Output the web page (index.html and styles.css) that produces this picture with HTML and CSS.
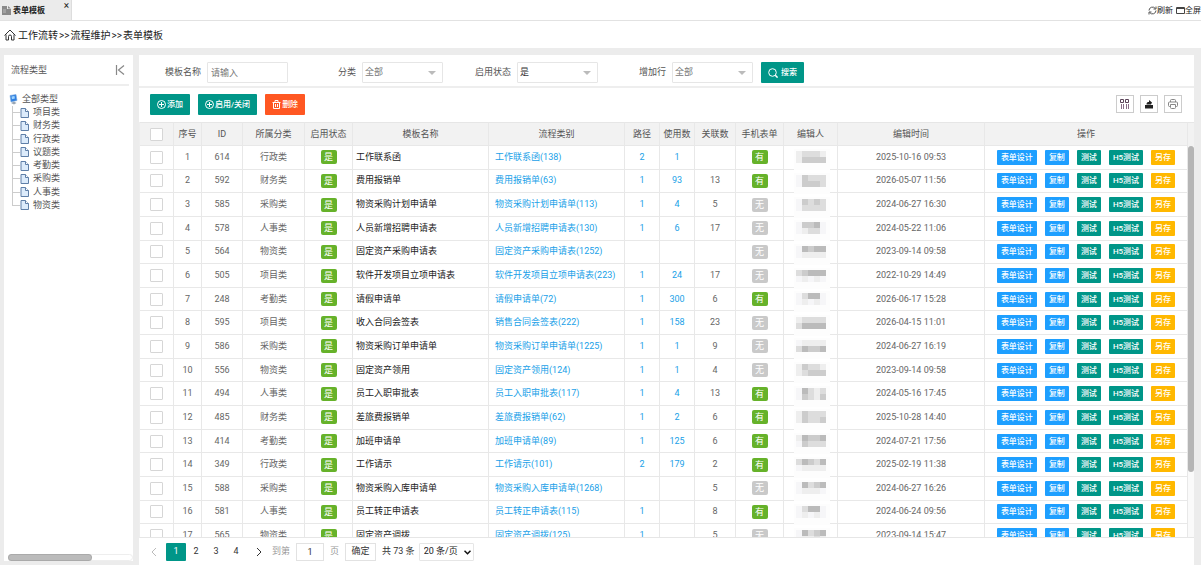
FILE: index.html
```html
<!DOCTYPE html>
<html lang="zh-CN">
<head>
  <meta charset="UTF-8">
  <meta name="viewport" content="width=device-width, initial-scale=1.0">
  <title>表单模板</title>
  <link rel="stylesheet" href="styles.css">
</head>
<body>
  <header class="tab-bar">
    <div class="tab">
      <svg class="tab-icon" width="9" height="10" viewBox="0 0 9 10"><path d="M0 1h5v3h4v6H0z" fill="#8a8a8a"/><path d="M6 1l3 2.500H6z" fill="#8a8a8a"/><path d="M1 5h3M1 7h3" stroke="#bbb"/></svg>
      <span class="tab-title">表单模板</span>
      <button class="tab-close" aria-label="关闭">×</button>
    </div>
    <nav class="tab-tools">
      <a href="#"><svg width="9" height="9" viewBox="0 0 9 9" fill="none" stroke="#555"><path d="M1 4.500a3.500 3.500 0 0 1 6.300-2M8 4.500a3.500 3.500 0 0 1-6.300 2"/><path d="M8 .5v2.500H5.500M1 8.500V6h2.500"/></svg>刷新</a>
      <a href="#"><svg width="9" height="9" viewBox="0 0 9 9" fill="none" stroke="#444"><path d="M.5 1.500h8v6h-8zM.5 2.500h8"/></svg>全屏</a>
    </nav>
  </header>

  <nav class="crumbs">
    <svg width="12" height="12" viewBox="0 0 12 12" fill="none" stroke="#333"><path d="M.5 6.500L6 1l5.500 5.500M2 5.500v5.500h2.500V7.500a1.500 1.500 0 0 1 3 0V11H10V5.500"/></svg>
    <span>工作流转</span><span>&gt;&gt;</span><span>流程维护</span><span>&gt;&gt;</span><span>表单模板</span>
  </nav>

  <div class="layout">
    <aside class="sidebar">
      <div class="sidebar-head">
        <span>流程类型</span>
        <button class="collapse" aria-label="收起"><svg width="10" height="10" viewBox="0 0 10 10" fill="none" stroke="#888" stroke-width="1.200"><path d="M1.500 0v10M9 .5L3.500 5 9 9.500"/></svg></button>
      </div>
      <div class="tree">
        <a href="#" class="tree-root">
          <svg width="9" height="11" viewBox="0 0 9 11"><path d="M1 1.500L7 .5l1 6-6 1.500z" fill="#2f7fe0" stroke="#7aa9dd" stroke-width=".6"/><path d="M2.500 2.500l3-.6.4 2.600-3 .8z" fill="#9fd4ff"/><path d="M2 9l3-1.500L7.500 9 5 10.500z" fill="#9aa7b5"/></svg>
          全部类型
        </a>
        <ul class="tree-list" id="treeList"></ul>
      </div>
      <div class="h-scroll"><div class="h-thumb"></div></div>
    </aside>

    <main class="main">
      <form class="filters">
        <div class="field"><label for="tplName">模板名称</label><input id="tplName" type="text" placeholder="请输入"></div>
        <div class="field"><label for="category">分类</label><div class="select"><select id="category"><option>全部</option></select></div></div>
        <div class="field"><label for="enabled">启用状态</label><div class="select"><select id="enabled" class="chosen"><option>是</option><option>否</option></select></div></div>
        <div class="field"><label for="addRow">增加行</label><div class="select"><select id="addRow"><option>全部</option></select></div></div>
        <button type="button" class="btn btn-search"><svg width="10" height="10" viewBox="0 0 10 10" fill="none" stroke="#fff"><circle cx="4.500" cy="4.500" r="3.800"/><path d="M7.300 7.300L9.600 9.600" stroke-width="1.500"/></svg>搜索</button>
      </form>

      <div class="toolbar">
        <button class="btn"><svg width="9" height="9" viewBox="0 0 9 9" fill="none" stroke="#fff"><circle cx="4.500" cy="4.500" r="4"/><path d="M4.500 2v5M2 4.500h5"/></svg>添加</button>
        <button class="btn"><svg width="9" height="9" viewBox="0 0 9 9" fill="none" stroke="#fff"><circle cx="4.500" cy="4.500" r="4"/><path d="M4.500 2v5M2 4.500h5"/></svg>启用/关闭</button>
        <button class="btn btn-danger"><svg width="9" height="9" viewBox="0 0 9 9" fill="none" stroke="#fff"><path d="M.5 2.500h8M3 2.500v-2h3v2M1.500 2.500v6h6v-6M3.500 4v3M5.500 4v3"/></svg>删除</button>
        <div class="table-tools">
          <button aria-label="筛选列"><svg width="10" height="10" viewBox="0 0 10 10" fill="none" stroke="#5b4358"><path d="M.5 .5h3v3h-3zM5.500 .5h3v3h-3z"/><path d="M1.500 5v5M3.500 5v5M6.500 5v5M8.500 5v5" stroke="#8a6f88"/></svg></button>
          <button aria-label="导出"><svg width="10" height="10" viewBox="0 0 10 10"><path d="M1 6h8v3.500H1z" fill="#222"/><path d="M2.500 5.500c0-2 1-2.500 2.500-2.500V1l3 2.500-1 2z" fill="#222"/></svg></button>
          <button aria-label="打印"><svg width="10" height="10" viewBox="0 0 10 10" fill="none" stroke="#888"><path d="M2.500 3V1.500a1 1 0 0 1 1-1h3a1 1 0 0 1 1 1V3M2.500 7.500h-1a1 1 0 0 1-1-1V4a1 1 0 0 1 1-1h7a1 1 0 0 1 1 1v2.500a1 1 0 0 1-1 1h-1M2.500 5.500h5v3a1 1 0 0 1-1 1h-3a1 1 0 0 1-1-1z"/></svg></button>
        </div>
      </div>

      <div class="table-area">
        <div class="table-scroll">
          <table>
            <colgroup>
              <col class="w-check"><col class="w-no"><col class="w-id"><col class="w-cat"><col class="w-state">
              <col class="w-name"><col class="w-name"><col class="w-num"><col class="w-num"><col class="w-id">
              <col class="w-state"><col class="w-editor"><col class="w-time"><col>
            </colgroup>
            <thead>
              <tr>
                <th><input type="checkbox" aria-label="全选"></th>
                <th>序号</th><th>ID</th><th>所属分类</th><th>启用状态</th><th>模板名称</th><th>流程类别</th>
                <th>路径</th><th>使用数</th><th>关联数</th><th>手机表单</th><th>编辑人</th><th>编辑时间</th><th>操作</th>
              </tr>
            </thead>
            <tbody id="rows"></tbody>
          </table>
        </div>
        <div class="v-scroll"><div class="v-head"></div><div class="v-thumb"></div></div>
      </div>

      <div class="pager">
        <button class="page arrow" disabled aria-label="上一页"><svg width="6" height="10" viewBox="0 0 6 10" fill="none" stroke="#bbb"><path d="M5 1L1 5l4 4"/></svg></button>
        <button class="page current">1</button>
        <button class="page">2</button>
        <button class="page">3</button>
        <button class="page">4</button>
        <button class="page arrow next" aria-label="下一页"><svg width="6" height="10" viewBox="0 0 6 10" fill="none" stroke="#333"><path d="M1 1l4 4-4 4"/></svg></button>
        <label class="muted" for="gotoPage">到第</label>
        <input id="gotoPage" type="text" value="1">
        <span class="muted">页</span>
        <button class="confirm">确定</button>
        <span>共 73 条</span>
        <div class="select page-size"><select aria-label="每页条数"><option>20 条/页</option></select><svg width="7" height="5" viewBox="0 0 7 5" fill="none" stroke="#111" stroke-width="1.500"><path d="M.5 .8l3 3 3-3"/></svg></div>
      </div>
    </main>
  </div>

  <script>
    const types = ['项目类', '财务类', '行政类', '议题类', '考勤类', '采购类', '人事类', '物资类'];

    // id, 分类, 模板名称, 流程类别, 路径, 使用数, 关联数, 手机表单, 编辑时间, 编辑人色块
    const rows = [
      [614, '行政类', '工作联系函', '工作联系函(138)', 2, 1, '', 1, '2025-10-16 09:53', 'edddeecccc'],
      [592, '财务类', '费用报销单', '费用报销单(63)', 1, 93, 13, 1, '2026-05-07 11:56', 'fcdddfcccd'],
      [585, '采购类', '物资采购计划申请单', '物资采购计划申请单(113)', 1, 4, 5, 0, '2024-06-27 16:30', 'fcdcdfdddd'],
      [578, '人事类', '人员新增招聘申请表', '人员新增招聘申请表(130)', 1, 6, 17, 0, '2024-05-22 11:06', 'fccbffeddf'],
      [564, '物资类', '固定资产采购申请表', '固定资产采购申请表(1252)', '', '', '', 0, '2023-09-14 09:58', 'fbcbbfeeee'],
      [505, '项目类', '软件开发项目立项申请表', '软件开发项目立项申请表(223)', 1, 24, 17, 0, '2022-10-29 14:49', 'dcbbbfefef'],
      [248, '考勤类', '请假申请单', '请假申请单(72)', 1, 300, 6, 1, '2026-06-17 15:28', 'fdbbffefef'],
      [595, '项目类', '收入合同会签表', '销售合同会签表(222)', 1, 158, 23, 0, '2026-04-15 11:01', 'edddddbbbb'],
      [586, '采购类', '物资采购订单申请单', '物资采购订单申请单(1225)', 1, 1, 9, 0, '2024-06-27 16:19', 'feeeedbccb'],
      [556, '物资类', '固定资产领用', '固定资产领用(124)', 1, 1, 4, 0, '2023-09-14 09:58', 'ecddeedccc'],
      [494, '人事类', '员工入职审批表', '员工入职审批表(117)', 1, 4, 13, 1, '2024-05-16 17:45', 'fbdedfcdec'],
      [485, '财务类', '差旅费报销单', '差旅费报销单(62)', 1, 2, 6, 1, '2025-10-28 14:40', 'ecdddecddc'],
      [414, '考勤类', '加班申请单', '加班申请单(89)', 1, 125, 6, 1, '2024-07-21 17:56', 'ebccbfcddd'],
      [349, '行政类', '工作请示', '工作请示(101)', 2, 179, 2, 1, '2025-02-19 11:38', 'dbcdbfeeee'],
      [588, '采购类', '物资采购入库申请单', '物资采购入库申请单(1268)', '', '', 5, 0, '2024-06-27 16:26', 'fbdcbfeeef'],
      [581, '人事类', '员工转正申请表', '员工转正申请表(115)', 1, '', 8, 1, '2024-06-24 09:56', 'fdbbffefef'],
      [565, '物资类', '固定资产调拨', '固定资产调拨(125)', 1, '', 5, 0, '2023-09-14 15:47', 'fbdcbfeede']
    ];

    // 编辑人打码: 5 x 2 的灰度方块
    function mosaic(shades) {
      let rects = '<rect x="7" y="-2" width="36" height="21" fill="#fdfdfd"/>';
      [...shades].forEach((c, i) => {
        const x = 9 + (i % 5) * 6;
        const y = Math.floor(i / 5) * 6;
        rects += `<rect x="${x}" y="${y}" width="6" height="6" fill="#${c.repeat(3)}"/>`;
      });
      return rects.replaceAll('#fff', '#f6f6f8');
    }

    document.getElementById('treeList').innerHTML = types.map(name => `
      <li><a href="#">
        <svg width="9" height="10" viewBox="0 0 9 10"><path d="M1 .5h4.500l3 3v6H1z" fill="#dcebfb" stroke="#5f7fa8"/><path d="M5.500 .5v3h3" fill="#fff" stroke="#5f7fa8"/></svg>
        ${name}</a></li>`).join('');

    document.getElementById('rows').innerHTML = rows.map((r, i) => `
      <tr>
        <td><input type="checkbox" aria-label="选择 ${r[0]}"></td>
        <td>${i + 1}</td>
        <td>${r[0]}</td>
        <td>${r[1]}</td>
        <td><span class="tag">是</span></td>
        <td class="name">${r[2]}</td>
        <td class="flow"><a href="#">${r[3]}</a></td>
        <td><a href="#">${r[4]}</a></td>
        <td><a href="#">${r[5]}</a></td>
        <td>${r[6]}</td>
        <td><span class="tag ${r[7] ? '' : 'off'}">${r[7] ? '有' : '无'}</span></td>
        <td><svg class="mosaic" width="48" height="12" viewBox="0 0 48 12">${mosaic(r[9])}</svg></td>
        <td>${r[8]}</td>
        <td><div class="actions">
          <button class="blue">表单设计</button><button class="blue">复制</button><button>测试</button><button>H5测试</button><button class="yellow">另存</button>
        </div></td>
      </tr>`).join('');
  </script>
</body>
</html>
```

FILE: styles.css
```css
* {
  box-sizing: border-box;
}
body {
  margin: 0;
  height: 100vh;
  display: flex;
  flex-direction: column;
  overflow: hidden;
  background-color: #ececec;
  color: #555;
  font-family: Roboto, "Noto Sans CJK SC", sans-serif;
  font-size: 9px;
  line-height: 13px;
}
a {
  color: inherit;
  text-decoration: none;
}
button,
input,
select {
  margin: 0;
  padding: 0;
  border: none;
  background: none;
  color: inherit;
  font: inherit;
}
button {
  cursor: pointer;
}
svg {
  flex: none;
}

/* 顶部标签 */
.tab-bar {
  display: flex;
  justify-content: space-between;
  height: 21px;
  background-color: #fff;
  border-bottom: 1px solid #e2e2e2;
  color: #222;
  font-size: 8px;
}
.tab {
  display: flex;
  align-items: center;
  gap: 2px;
  width: 72px;
  padding: 0 2px;
  background-color: #ebebeb;
  border-right: 1px solid #ddd;
}
.tab-title {
  font-weight: bold;
}
.tab-close {
  align-self: flex-start;
  margin-left: auto;
  font-size: 10px;
  line-height: 12px;
}
.tab-tools {
  display: flex;
  align-items: center;
  gap: 3px;
}
.tab-tools a {
  display: flex;
  align-items: center;
}
.crumbs {
  display: flex;
  align-items: center;
  gap: 1px;
  height: 27px;
  padding: 1px 0 0 4px;
  background-color: #fff;
  color: #222;
  font-size: 10px;
}
.crumbs svg {
  margin-right: 1px;
}

.layout {
  flex: 1;
  display: flex;
  gap: 6px;
  min-height: 0;
  padding: 7px 7px 0 4px;
}

/* 左侧分类树 */
.sidebar {
  display: flex;
  flex-direction: column;
  width: 129px;
  margin-bottom: 4px;
  background-color: #fff;
}
.sidebar-head {
  display: flex;
  align-items: center;
  justify-content: space-between;
  height: 31px;
  margin: 0 4px;
  padding: 1px 4px 0 3px;
  border-bottom: 2px solid #eee;
}
.collapse {
  display: flex;
}
.tree {
  flex: 1;
  padding: 6px 5px;
}
.tree-root,
.tree-list a {
  display: flex;
  align-items: center;
  gap: 4px;
}
.tree-root {
  height: 14px;
}
.tree-list {
  display: flex;
  flex-direction: column;
  height: 106px;
  margin: 0 0 0 3px;
  padding: 0;
  list-style: none;
}
.tree-list li {
  flex: 1;
  display: flex;
  align-items: center;
  background: linear-gradient(#ccc, #ccc) 0 0 / 1px 100% no-repeat;
}
.tree-list li:last-child {
  background-size: 1px 50%;
}
.tree-list li::before {
  content: "";
  width: 8px;
  border-top: 1px solid #ccc;
}
.h-scroll {
  height: 7px;
  margin-left: 4px;
  border: 1px solid #eee;
  border-radius: 4px;
}
.h-thumb {
  width: 67%;
  height: 100%;
  background-color: #bbb;
  border-radius: 4px;
  box-shadow: 0 0 0 1px #aaa;
}

/* 查询条件 */
.main {
  flex: 1;
  display: flex;
  flex-direction: column;
  min-width: 0;
  background-color: #fff;
}
.filters {
  display: flex;
  align-items: center;
  gap: 6px;
  height: 33px;
  padding-top: 4px;
  border-bottom: 2px solid #eee;
}
.field {
  display: flex;
  align-items: center;
  gap: 6px;
}
.field label {
  width: 62px;
  text-align: right;
}
.field input,
.select select {
  width: 81px;
  height: 21px;
  padding: 0 3px;
  background-color: #fff;
  border: 1px solid #e6e6e6;
  border-radius: 1px;
}
.select select {
  padding: 0 2px;
}
.field input::placeholder {
  color: #777;
}
.select {
  position: relative;
}
.select select {
  display: block;
  appearance: none;
  color: #777;
}
.select select.chosen {
  color: #333;
}
.field .select::after {
  content: "";
  position: absolute;
  top: 9px;
  right: 7px;
  border: 4px solid transparent;
  border-top-color: #bbb;
  pointer-events: none;
}
.btn {
  display: flex;
  align-items: center;
  justify-content: center;
  gap: 1px;
  height: 21px;
  padding: 0 7px;
  background-color: #009688;
  border-radius: 1px;
  color: #fff;
  font-size: 8px;
  font-weight: 500;
}
.btn-search {
  gap: 3px;
  margin-left: 2px;
}
.btn-danger {
  background-color: #ff5722;
}

/* 表格工具栏 */
.toolbar {
  display: flex;
  align-items: center;
  gap: 8px;
  height: 34px;
  padding: 0 12px 2px 11px;
}
.table-tools {
  display: flex;
  gap: 6px;
  margin-left: auto;
}
.table-tools button {
  display: flex;
  align-items: center;
  justify-content: center;
  width: 18px;
  height: 18px;
  border: 1px solid #ccc;
}

/* 表格 */
.table-area {
  flex: 1;
  display: flex;
  min-height: 0;
  border-bottom: 1px solid #e6e6e6;
  border-left: 1px solid #eee;
}
.table-scroll {
  flex: 1;
  overflow: auto;
  scrollbar-width: none;
}
table {
  width: 100%;
  height: 426px;
  table-layout: fixed;
  border-spacing: 0;
}
thead tr {
  height: 24px;
}
th {
  position: sticky;
  top: 0;
  z-index: 1;
  background-color: #f2f2f2;
  border-top: 1px solid #e6e6e6;
  font-weight: normal;
}
th,
td {
  padding: 0;
  border-right: 1px solid #e8e8e8;
  border-bottom: 1px solid #e8e8e8;
  text-align: center;
  vertical-align: middle;
  white-space: nowrap;
}
td {
  color: #666;
}
td a {
  color: #1a9fe8;
}
td.name,
td.flow {
  text-align: left;
}
td.name {
  padding-left: 3px;
  color: #222;
}
td.flow {
  padding-left: 6px;
}
.w-check {
  width: 34px;
}
.w-no {
  width: 28px;
}
.w-id {
  width: 41px;
}
.w-cat {
  width: 62px;
}
.w-state {
  width: 48px;
}
.w-name {
  width: 136px;
}
.w-num {
  width: 35px;
}
.w-editor {
  width: 54px;
}
.w-time {
  width: 147px;
}
th input,
td input {
  display: block;
  appearance: none;
  width: 13px;
  height: 13px;
  margin: 0 auto;
  background-color: #fff;
  border: 1px solid #d6d6d6;
  border-radius: 1px;
}
.tag {
  display: block;
  width: 16px;
  height: 14px;
  margin: 0 auto;
  background-color: #66b22a;
  border-radius: 2px;
  color: #fff;
  line-height: 14px;
}
.tag.off {
  background-color: #c9c9c9;
}
.mosaic {
  display: block;
  margin: 0 auto;
  overflow: visible;
}
.actions {
  display: flex;
  justify-content: center;
  gap: 8px;
}
.actions button {
  height: 15px;
  padding: 0 4px;
  background-color: #009688;
  border-radius: 1px;
  color: #fff;
  font-size: 8px;
  font-weight: 500;
  line-height: 15px;
}
.actions .blue {
  background-color: #1e9fff;
}
.actions .yellow {
  background-color: #ffb800;
}
.v-scroll {
  display: flex;
  flex-direction: column;
  width: 6px;
  background-color: #fafafa;
}
.v-head {
  height: 24px;
  background-color: #f2f2f2;
  border-top: 1px solid #e6e6e6;
}
.v-thumb {
  height: 83%;
  max-height: calc(100% - 89px);
  background-color: #b5b5b5;
  border-radius: 3px;
}

/* 分页 */
.pager {
  display: flex;
  align-items: center;
  gap: 6px;
  height: 27px;
  padding-left: 12px;
  color: #333;
}
.page {
  width: 20px;
  height: 18px;
  margin-right: -6px;
}
.page.arrow {
  display: flex;
  align-items: center;
  width: 15px;
}
.page.next {
  justify-content: center;
  width: 26px;
}
.page.current {
  background-color: #009688;
  border-radius: 1px;
  color: #fff;
}
.muted {
  color: #999;
}
.pager input {
  width: 28px;
  height: 18px;
  border: 1px solid #e2e2e2;
  text-align: center;
}
.confirm {
  width: 31px;
  height: 18px;
  border: 1px solid #e2e2e2;
}
.page-size {
  margin-left: -2px;
}
.page-size select {
  width: 55px;
  height: 18px;
  padding: 0 4px;
  color: #222;
}
.page-size svg {
  position: absolute;
  top: 7px;
  right: 3px;
  pointer-events: none;
}
```
